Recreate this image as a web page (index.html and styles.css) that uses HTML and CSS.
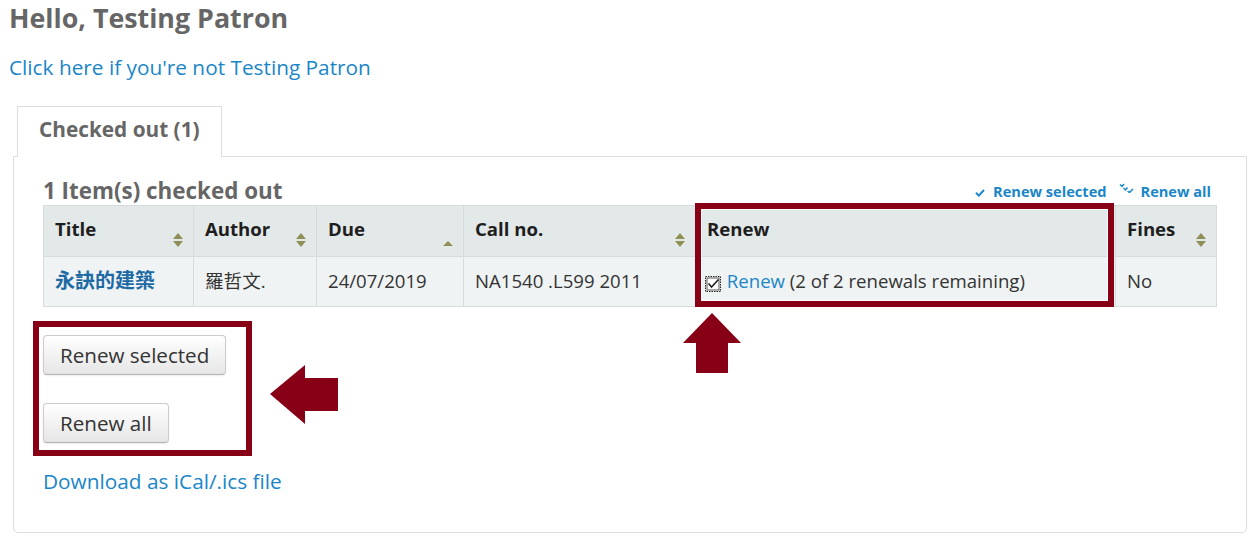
FILE: index.html
```html
<!DOCTYPE html>
<html lang="en">
<head>
  <meta charset="UTF-8" />
  <meta name="viewport" content="width=device-width, initial-scale=1.0" />
  <title>Your summary</title>
  <link rel="stylesheet" href="styles.css">
</head>
<body>
  <h2 class="greeting">Hello, Testing Patron</h2>
  <p class="not-me"><a href="#">Click here if you're not Testing Patron</a></p>

  <div class="tabs">
    <ul class="tab-list">
      <li class="tab active"><a href="#">Checked out (1)</a></li>
    </ul>

    <div class="tab-panel">
      <div class="panel-head">
        <h3>1 Item(s) checked out</h3>
        <div class="quick-links">
          <a href="#">
            <svg class="ql-icon" width="10" height="8" viewBox="0 0 10 8"><path d="M1 3.8 L3.8 6.6 L9 1" fill="none" stroke="currentColor" stroke-width="2"/></svg>Renew selected</a>
          <a href="#">
            <svg class="ql-icon raised" width="15" height="10" viewBox="0 0 15 10"><path d="M1 1.5 L3 3.5 L5 1 M4.5 5 L6.5 7 L8.5 4.5 M8.5 8 L10.5 9.5 L14 6" fill="none" stroke="currentColor" stroke-width="1.5"/></svg>Renew all</a>
        </div>
      </div>

      <div class="table-wrap">
        <table class="checkouts">
          <colgroup>
            <col style="width:150px">
            <col style="width:123px">
            <col style="width:147px">
            <col style="width:232px">
            <col style="width:420px">
            <col style="width:101px">
          </colgroup>
          <thead>
            <tr>
              <th>Title <span class="sort both"></span></th>
              <th>Author <span class="sort both"></span></th>
              <th>Due <span class="sort asc"></span></th>
              <th>Call no. <span class="sort both"></span></th>
              <th>Renew</th>
              <th>Fines <span class="sort both"></span></th>
            </tr>
          </thead>
          <tbody>
            <tr>
              <td><a class="title-link cjk" href="#">永訣的建築</a></td>
              <td><span class="cjk">羅哲文.</span></td>
              <td>24/07/2019</td>
              <td>NA1540 .L599 2011</td>
              <td class="renew-cell">
                <svg class="check" width="16" height="16" viewBox="0 0 16 16">
                  <rect x="0.5" y="0.5" width="15" height="15" fill="#fff" stroke="#222" stroke-dasharray="1.5 1"/>
                  <rect x="2" y="2" width="12" height="12" fill="#fff" stroke="#555" stroke-width="1"/>
                  <path d="M3.5 7.5 L6.5 11 L13.5 3.5" fill="none" stroke="#222" stroke-width="1.6"/>
                </svg>
                <a href="#">Renew</a> (2 of 2 renewals remaining)
              </td>
              <td>No</td>
            </tr>
          </tbody>
        </table>

        <div class="callout-box"></div>
        <svg class="arrow-up" width="58" height="60" viewBox="0 0 58 60">
          <path d="M29 0 L58 30 L45 30 L45 60 L13 60 L13 30 L0 30 Z" fill="#870016"/>
        </svg>
      </div>

      <div class="renew-row">
        <div class="callout-frame">
          <button type="button" class="btn">Renew selected</button>
          <button type="button" class="btn">Renew all</button>
        </div>
        <svg class="arrow-left" width="68" height="60" viewBox="0 0 68 60">
          <path d="M0 29 L35 0 L35 13 L68 13 L68 46 L35 46 L35 59 Z" fill="#870016"/>
        </svg>
      </div>

      <a class="ical" href="#">Download as iCal/.ics file</a>
    </div>
  </div>
</body>
</html>
```

FILE: styles.css
```css
body {
  font-family: "Open Sans", Arial, sans-serif;
  color: #333;
  background-color: #fff;
  margin: 0;
  padding: 0 9px;
}
a {
  color: #1a86c8;
  text-decoration: none;
}
.greeting {
  margin: 1px 0 0;
  font-size: 26.8px;
  line-height: 34px;
  font-weight: bold;
  color: #666;
}
.not-me {
  margin: 17px 0 0;
  font-size: 20.8px;
  line-height: 30px;
}

/* tabs */
.tabs {
  margin: 24px 3px 0 4px;
}
.tab-list {
  list-style: none;
  margin: 0;
  padding: 0 0 0 4px;
  display: flex;
}
.tab {
  position: relative;
  margin-bottom: -1px;
  background-color: #fff;
  border: 1px solid #ddd;
  border-bottom: none;
}
.tab a {
  display: block;
  padding: 8px 21px 14px;
  font-size: 20.8px;
  line-height: 28px;
  font-weight: bold;
  color: #666;
}
.tab-panel {
  border: 1px solid #ddd;
  border-radius: 0 0 5px 5px;
  padding: 21px 30px 36px 29px;
}

.panel-head {
  display: flex;
  justify-content: space-between;
  align-items: baseline;
}
.panel-head h3 {
  margin: 0;
  font-size: 22.4px;
  line-height: 26px;
  font-weight: bold;
  color: #666;
}
.quick-links {
  display: flex;
  gap: 12px;
  padding-right: 5px;
  position: relative;
  top: -2px;
}
.quick-links a {
  font-size: 14.6px;
  font-weight: bold;
  color: #1a86c8;
}
.ql-icon {
  margin-right: 8px;
}
.ql-icon.raised {
  vertical-align: 4px;
  margin-right: 7px;
}

/* table */
.table-wrap {
  position: relative;
  margin-top: 1px;
}
.checkouts {
  width: 100%;
  table-layout: fixed;
  border-collapse: collapse;
  font-size: 18.6px;
  line-height: 28px;
}
.checkouts th,
.checkouts td {
  border: 1px solid #d6dbdb;
  text-align: left;
}
.checkouts th {
  position: relative;
  padding: 9px 11px 13px;
  vertical-align: top;
  background-color: #e3e8e8;
  color: #1e1e1e;
  font-weight: bold;
}
.checkouts td {
  padding: 10px 11px 11px;
  background-color: #f0f3f3;
  color: #333;
  white-space: nowrap;
}
.cjk {
  font-family: "Open Sans", "Noto Sans CJK TC", sans-serif;
  line-height: 1;
}
.title-link {
  font-size: 20px;
  font-weight: bold;
  color: #1d6aa5;
}
.sort {
  position: absolute;
  right: 10px;
  bottom: 9px;
  width: 10px;
  height: 14px;
}
.sort::before,
.sort::after {
  content: "";
  position: absolute;
  left: 0;
  border-left: 5px solid transparent;
  border-right: 5px solid transparent;
}
.sort.both::before {
  top: 0;
  border-bottom: 6px solid #8f9058;
}
.sort.both::after {
  bottom: 0;
  border-top: 6px solid #8f9058;
}
.sort.asc::before {
  bottom: 1px;
  border-bottom: 5px solid #8f9058;
}
.check {
  vertical-align: -4px;
  margin: 0 1px 0 -2px;
}

/* annotations */
.callout-box {
  position: absolute;
  left: 652px;
  top: -2px;
  width: 419px;
  height: 104px;
  box-sizing: border-box;
  border: 6px solid #870016;
  box-shadow: inset 0 0 0 1px #fff;
}
.arrow-up {
  position: absolute;
  left: 640px;
  top: 108px;
}

.renew-row {
  display: flex;
  align-items: center;
  margin-top: 14px;
}
.callout-frame {
  display: flex;
  flex-direction: column;
  align-items: flex-start;
  gap: 28px;
  margin-left: -10px;
  width: 190px;
  padding: 8px 13px 7px 4px;
  border: 6px solid #870016;
}
.arrow-left {
  margin: 13px 0 0 18px;
}
.btn {
  font-family: "Open Sans", Arial, sans-serif;
  font-size: 20.6px;
  line-height: 28px;
  color: #333;
  padding: 5px 16px;
  border: 1px solid #ccc;
  border-bottom-color: #b3b3b3;
  border-radius: 4px;
  background: linear-gradient(#fff, #e6e6e6);
  box-shadow: 0 1px 2px rgba(0, 0, 0, 0.08);
}
.ical {
  display: block;
  margin-top: 10px;
  font-size: 20.8px;
  line-height: 30px;
}
```
